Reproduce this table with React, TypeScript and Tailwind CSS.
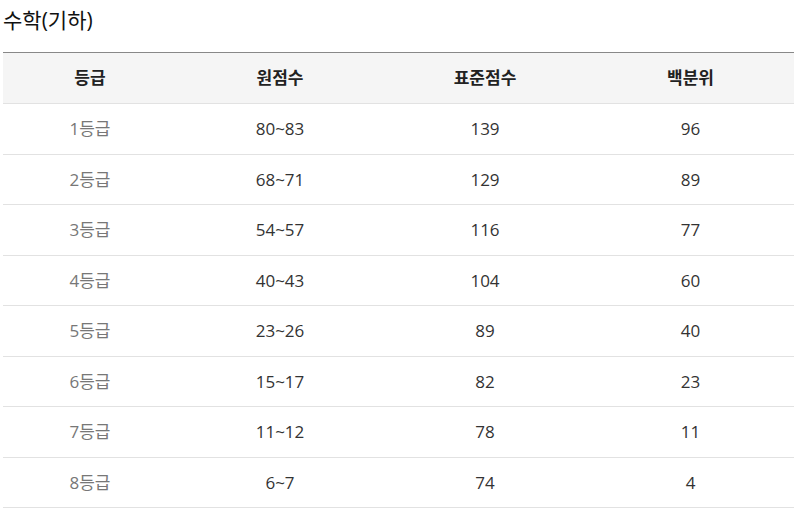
import React from "react";

const rows = [
  ["1등급", "80~83", "139", "96"],
  ["2등급", "68~71", "129", "89"],
  ["3등급", "54~57", "116", "77"],
  ["4등급", "40~43", "104", "60"],
  ["5등급", "23~26", "89", "40"],
  ["6등급", "15~17", "82", "23"],
  ["7등급", "11~12", "78", "11"],
  ["8등급", "6~7", "74", "4"],
];

export default function App() {
  return (
    <div
      className="w-[800px] h-[515px] bg-white overflow-hidden px-[3px]"
      style={{ fontFamily: '"Open Sans", "Noto Sans CJK KR", sans-serif' }}
    >
      <div className="h-[52px] pt-[4px] text-[21px] leading-[32px] text-[#111]">수학(기하)</div>
      <table className="w-[791px] border-collapse table-fixed">
        <colgroup>
          <col className="w-[174px]" />
          <col className="w-[206px]" />
          <col className="w-[204px]" />
          <col className="w-[207px]" />
        </colgroup>
        <thead>
          <tr className="h-[51px] bg-[#f5f5f5] border-t border-t-[#888] border-b border-b-[#e2e2e2]">
            {["등급", "원점수", "표준점수", "백분위"].map((h) => (
              <th key={h} className="text-center text-[17px] font-bold text-[#222] p-0">
                {h}
              </th>
            ))}
          </tr>
        </thead>
        <tbody>
          {rows.map((r) => (
            <tr key={r[0]} className="h-[50.5px] border-b border-b-[#e2e2e2]">
              {r.map((c, i) => (
                <td
                  key={i}
                  className={
                    "text-center text-[17px] p-0 " + (i === 0 ? "text-[#777]" : "text-[#333]")
                  }
                >
                  {c}
                </td>
              ))}
            </tr>
          ))}
        </tbody>
      </table>
    </div>
  );
}
